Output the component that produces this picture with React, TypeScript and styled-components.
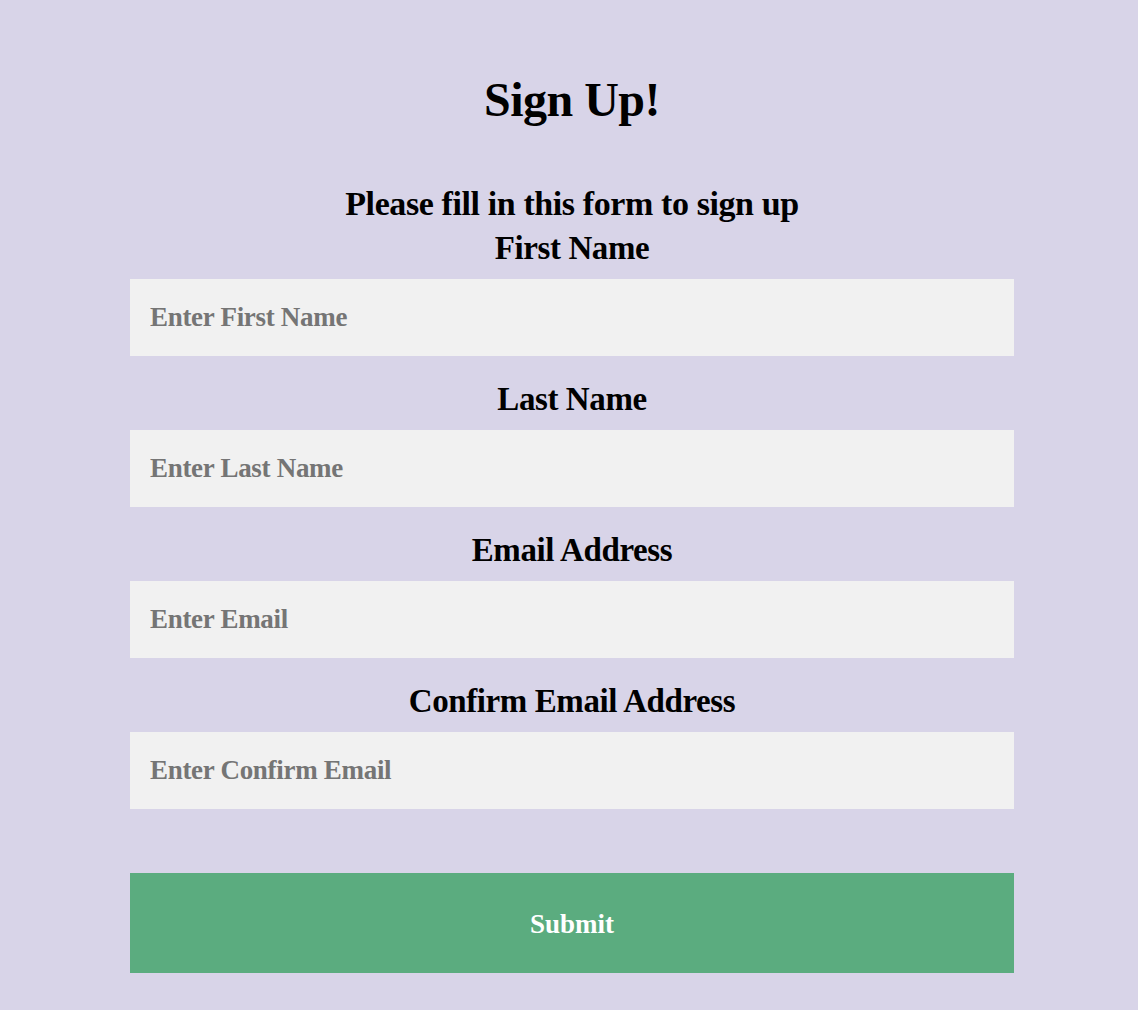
import React from "react";
import styled, { createGlobalStyle } from "styled-components";

const Global = createGlobalStyle`
  html, body { margin: 0; padding: 0; background: #d8d4e8; }
  body { font-family: "Liberation Serif", "DejaVu Serif", serif; }
  * { box-sizing: border-box; }
`;

const Page = styled.div`
  width: 1138px;
  min-height: 1010px;
  background: #d8d4e8;
  padding: 72px 124px 36px 130px;
`;

const Title = styled.h1`
  margin: 0;
  text-align: center;
  font-size: 48px;
  line-height: 56px;
  font-weight: 700;
  color: #000;
  letter-spacing: -0.5px;
`;

const Form = styled.form`
  display: flex;
  flex-direction: column;
  margin-top: 56px;
`;

const Subtitle = styled.p`
  margin: 0 0 4px;
  text-align: center;
  font-size: 34px;
  line-height: 40px;
  font-weight: 700;
  letter-spacing: -0.4px;
`;

const Field = styled.div`
  display: flex;
  flex-direction: column;
  margin-top: ${(p: { $first?: boolean }) => (p.$first ? "0" : "23px")};
`;

const Label = styled.label`
  text-align: center;
  font-size: 33px;
  line-height: 40px;
  font-weight: 700;
  letter-spacing: -0.4px;
  margin-bottom: 11px;
`;

const Input = styled.input`
  height: 77px;
  width: 100%;
  border: none;
  outline: none;
  background: #f1f1f1;
  padding: 0 20px;
  font-family: "Liberation Serif", "DejaVu Serif", serif;
  font-weight: 700;
  font-size: 27px;
  color: #000;
  letter-spacing: -0.3px;
  &::placeholder { color: #757575; }
`;

const Submit = styled.button`
  margin-top: 64px;
  height: 100px;
  width: 100%;
  border: none;
  padding-top: 4px;
  background: #5bac7f;
  color: #fff;
  font-family: "Liberation Serif", "DejaVu Serif", serif;
  font-weight: 700;
  font-size: 27px;
  cursor: pointer;
`;

const fields = [
  { label: "First Name", ph: "Enter First Name" },
  { label: "Last Name", ph: "Enter Last Name" },
  { label: "Email Address", ph: "Enter Email" },
  { label: "Confirm Email Address", ph: "Enter Confirm Email" },
];

export default function App() {
  return (
    <>
      <Global />
      <Page>
        <Title>Sign Up!</Title>
        <Form onSubmit={(e) => e.preventDefault()}>
          <Subtitle>Please fill in this form to sign up</Subtitle>
          {fields.map((f, i) => (
            <Field key={f.label} $first={i === 0}>
              <Label>{f.label}</Label>
              <Input placeholder={f.ph} />
            </Field>
          ))}
          <Submit type="submit">Submit</Submit>
        </Form>
      </Page>
    </>
  );
}
